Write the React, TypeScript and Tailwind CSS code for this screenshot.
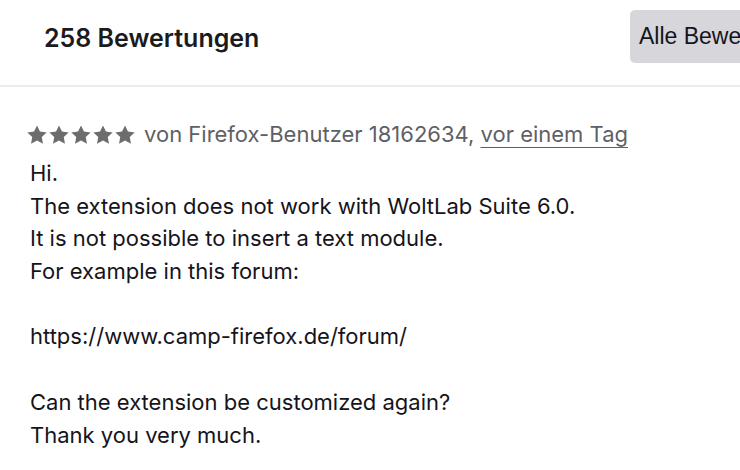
const lines = [
  'Hi.',
  'The extension does not work with WoltLab Suite 6.0.',
  'It is not possible to insert a text module.',
  'For example in this forum:',
  '',
  'https://www.camp-firefox.de/forum/',
  '',
  'Can the extension be customized again?',
  'Thank you very much.',
];

function Star() {
  return (
    <svg viewBox="0 0 24 24" className="h-[22px] w-[22px] fill-[#6d6d6d]">
      <path d="M12 1.5l3.2 6.7 7.3 1-5.3 5.1 1.3 7.3L12 18.1l-6.5 3.5 1.3-7.3-5.3-5.1 7.3-1z" />
    </svg>
  );
}

export default function App() {
  return (
    <div className="h-[470px] w-[740px] overflow-hidden bg-white font-['Inter',sans-serif] text-[#15141a]">
      <div className="flex h-[87px] items-center justify-between border-b-2 border-[#ececec] pl-[44px]">
        <h2 className="mb-[8px] text-[25px] font-semibold text-[#1b1b1d]">258 Bewertungen</h2>
        <button className="mb-[12px] h-[53px] w-[180px] shrink-0 translate-x-[70px] whitespace-nowrap rounded-[5px] bg-[#d7d7db] pl-[9px] text-left font-['Liberation_Sans',sans-serif] text-[23px] text-[#15141a]">
          Alle Bewertungen
        </button>
      </div>

      <div className="pl-[26px] pt-[31px]">
        <div className="flex items-center">
          <div className="flex">
            <Star />
            <Star />
            <Star />
            <Star />
            <Star />
          </div>
          <span className="ml-[8px] text-[22px] text-[#5f5f66]">
            von Firefox-Benutzer 18162634,{' '}
            <a className="underline decoration-1 underline-offset-[5px]">vor einem Tag</a>
          </span>
        </div>
        <div className="mt-[6px] pl-[4px] text-[22px] leading-[32.7px]">
          {lines.map((l, i) => (
            <p key={i} className="h-[32.7px]">
              {l}
            </p>
          ))}
        </div>
      </div>
    </div>
  );
}
